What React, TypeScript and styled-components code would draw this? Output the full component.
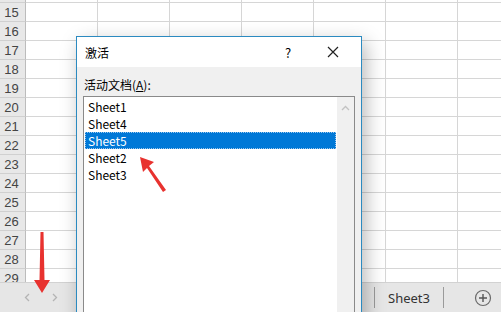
import React from "react";
import styled, { createGlobalStyle } from "styled-components";

const GlobalStyle = createGlobalStyle`
    html, body {
        margin: 0;
        padding: 0;
        background: #ffffff;
        overflow: hidden;
    }
`;

const Page = styled.div`
    position: relative;
    width: 501px;
    height: 312px;
    display: flex;
    flex-direction: column;
    overflow: hidden;
    font-family: "Liberation Sans", Arial, sans-serif;
`;

const GridArea = styled.div`
    flex: 1;
    overflow: hidden;
`;

const Grid = styled.div`
    margin-top: -16px;
    display: flex;
    flex-direction: column;
`;

const Row = styled.div`
    display: flex;
    height: 19px;
`;

const RowHead = styled.div`
    box-sizing: border-box;
    width: 26px;
    flex: none;
    background: #e8e8e8;
    border-right: 1px solid #bcbcbc;
    border-bottom: 1px solid #d0d0d0;
    color: #444;
    font-size: 13px;
    display: flex;
    align-items: flex-end;
    justify-content: center;
    padding-bottom: 1px;
    padding-right: 2px;
`;

const Cell = styled.div`
    box-sizing: border-box;
    width: 72px;
    flex: none;
    border-right: 1px solid #d6d6d6;
    border-bottom: 1px solid #d6d6d6;
`;

const TabBar = styled.div`
    box-sizing: border-box;
    height: 30px;
    flex: none;
    background: #e6e6e6;
    border-top: 1px solid #d2d2d2;
    display: flex;
    align-items: center;
`;

const NavArrows = styled.div`
    width: 374px;
    display: flex;
    align-items: center;
    gap: 22px;
    padding-left: 24px;
    box-sizing: border-box;
`;

const Tab = styled.div`
    box-sizing: border-box;
    width: 70px;
    height: 21px;
    border-left: 1px solid #9a9a9a;
    border-right: 1px solid #9a9a9a;
    display: flex;
    align-items: center;
    justify-content: center;
    font-size: 13px;
    color: #333;
    font-family: "Noto Sans", "Liberation Sans", sans-serif;
`;

const AddButton = styled.div`
    margin-left: 30px;
    display: flex;
    align-items: center;
`;

const Dialog = styled.div`
    position: absolute;
    left: 76px;
    top: 36px;
    width: 286px;
    height: 300px;
    box-sizing: border-box;
    border: 1px solid #2b8ac0;
    background: #f0f0f0;
    box-shadow: 4px 6px 18px rgba(0, 0, 0, 0.28);
    display: flex;
    flex-direction: column;
    font-family: "Noto Sans CJK SC", "Noto Sans", sans-serif;
    font-size: 12px;
    color: #000;
`;

const TitleBar = styled.div`
    height: 30px;
    flex: none;
    background: #ffffff;
    display: flex;
    align-items: center;
    padding-left: 8px;
`;

const Title = styled.div`
    flex: 1;
    font-size: 12px;
`;

const TitleButton = styled.div<{ w: number }>`
    width: ${(p) => p.w}px;
    display: flex;
    align-items: center;
    justify-content: center;
    font-size: 13px;
`;

const Body = styled.div`
    flex: 1;
    display: flex;
    flex-direction: column;
    padding: 9px 6px 0 6px;
`;

const Label = styled.div`
    height: 18px;
    line-height: 18px;
    margin-bottom: 2px;
    padding-left: 1px;
    u {
        text-decoration: underline;
    }
`;

const ListBox = styled.div`
    box-sizing: border-box;
    width: 272px;
    flex: 1;
    background: #ffffff;
    border: 1px solid #8a8a8a;
    display: flex;
`;

const Items = styled.div`
    flex: 1;
    padding: 1px 1px 0 1px;
`;

const Item = styled.div<{ selected?: boolean }>`
    box-sizing: border-box;
    height: 17px;
    line-height: 15px;
    padding-left: 2px;
    background: ${(p) => (p.selected ? "#0078d7" : "transparent")};
    color: ${(p) => (p.selected ? "#ffffff" : "#000000")};
    border: 1px ${(p) => (p.selected ? "dotted #9cc7ec" : "solid transparent")};
`;

const ScrollBar = styled.div`
    width: 17px;
    flex: none;
    background: #f0f0f0;
    display: flex;
    justify-content: center;
    padding-top: 8px;
    box-sizing: border-box;
`;

const Overlay = styled.svg`
    position: absolute;
    left: 0;
    top: 0;
    pointer-events: none;
`;

const rows = Array.from({ length: 16 }, (_, i) => 14 + i);
const cols = Array.from({ length: 7 }, (_, i) => i);
const sheets = ["Sheet1", "Sheet4", "Sheet5", "Sheet2", "Sheet3"];

function App() {
    return (
        <Page>
            <GlobalStyle />
            <GridArea>
                <Grid>
                    {rows.map((r) => (
                        <Row key={r}>
                            {/* row 14 sits above the visible area, so it has no label */}
                            <RowHead>{r > 14 ? r : ""}</RowHead>
                            {cols.map((c) => <Cell key={c} />)}
                        </Row>
                    ))}
                </Grid>
            </GridArea>
            <TabBar>
                <NavArrows>
                    <svg width="6" height="9" viewBox="0 0 6 9">
                        <path d="M5 1 L1.5 4.5 L5 8" fill="none" stroke="#b4b4b4" strokeWidth="1.3" />
                    </svg>
                    <svg width="6" height="9" viewBox="0 0 6 9">
                        <path d="M1 1 L4.5 4.5 L1 8" fill="none" stroke="#b4b4b4" strokeWidth="1.3" />
                    </svg>
                </NavArrows>
                <Tab>Sheet3</Tab>
                <AddButton>
                    <svg width="18" height="18" viewBox="0 0 18 18">
                        <circle cx="9" cy="9" r="7.5" fill="none" stroke="#6a6a6a" strokeWidth="1.2" />
                        <path d="M9 5 V13 M5 9 H13" stroke="#555" strokeWidth="1.4" />
                    </svg>
                </AddButton>
            </TabBar>

            <Dialog>
                <TitleBar>
                    <Title>激活</Title>
                    <TitleButton w={34}>?</TitleButton>
                    <TitleButton w={56}>
                        <svg width="12" height="12" viewBox="0 0 12 12">
                            <path d="M1 1 L11 11 M11 1 L1 11" stroke="#222" strokeWidth="1.2" />
                        </svg>
                    </TitleButton>
                </TitleBar>
                <Body>
                    <Label>活动文档(<u>A</u>):</Label>
                    <ListBox>
                        <Items>
                            {sheets.map((s) => (
                                <Item key={s} selected={s === "Sheet5"}>{s}</Item>
                            ))}
                        </Items>
                        <ScrollBar>
                            <svg width="9" height="6" viewBox="0 0 9 6">
                                <path d="M1 5 L4.5 1.5 L8 5" fill="none" stroke="#c2c2c2" strokeWidth="1.3" />
                            </svg>
                        </ScrollBar>
                    </ListBox>
                </Body>
            </Dialog>

            <Overlay width="501" height="312" viewBox="0 0 501 312">
                <path d="M166 190 L149 166 L154 162 L140 157 L143 172 L147 168 L163 192 Z" fill="#e8322f" />
                <path d="M40.5 232 L43.5 232 L44.5 280 L50 280 L42 293 L34 280 L39.5 280 Z" fill="#e8322f" />
            </Overlay>
        </Page>
    );
}

export default App;
